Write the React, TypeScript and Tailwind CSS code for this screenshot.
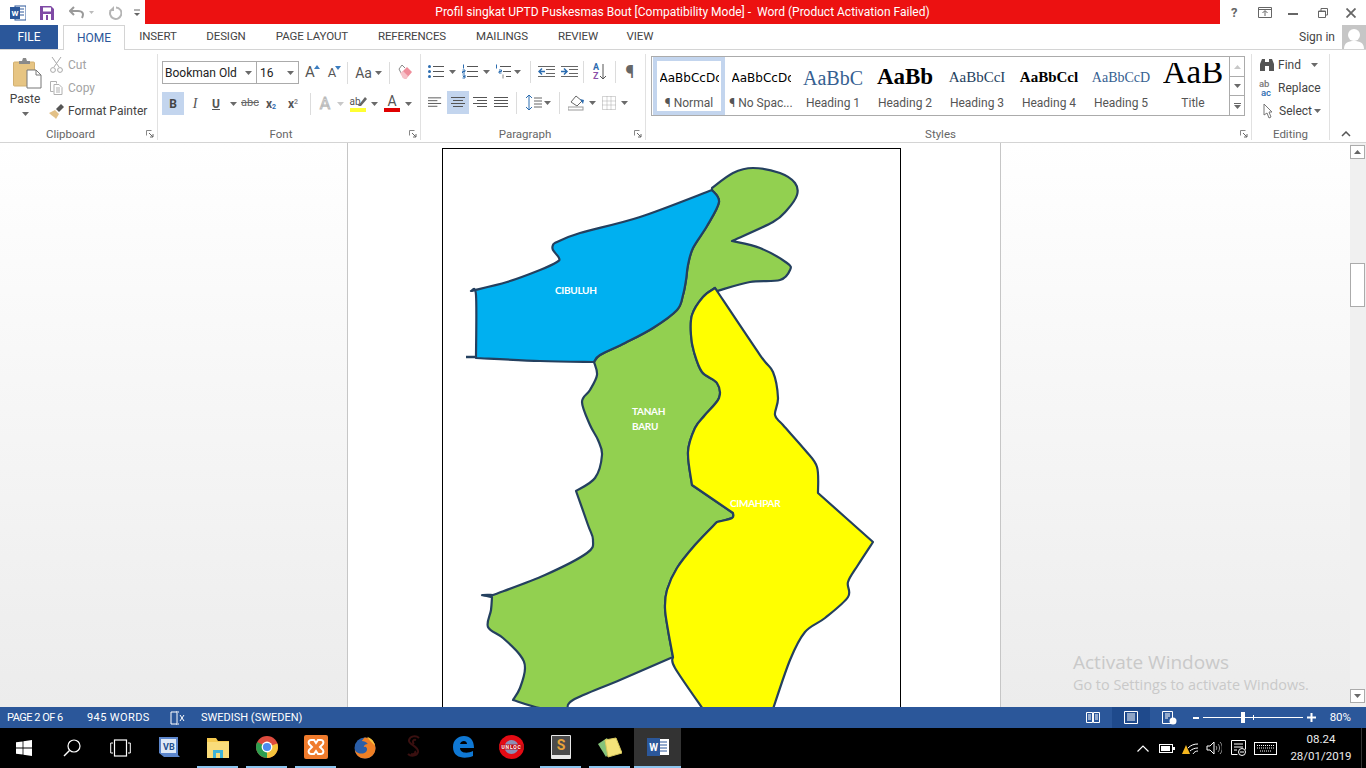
import React from "react";

type P = [number, number];
function curve(pts: P[]): string {
  let d = "";
  for (let i = 0; i < pts.length - 1; i++) {
    const p0 = pts[Math.max(0, i - 1)], p1 = pts[i], p2 = pts[i + 1], p3 = pts[Math.min(pts.length - 1, i + 2)];
    const c1 = [p1[0] + (p2[0] - p0[0]) / 6, p1[1] + (p2[1] - p0[1]) / 6];
    const c2 = [p2[0] - (p3[0] - p1[0]) / 6, p2[1] - (p3[1] - p1[1]) / 6];
    d += `C${c1[0]} ${c1[1]} ${c2[0]} ${c2[1]} ${p2[0]} ${p2[1]}`;
  }
  return d;
}
const shape = (...segs: P[][]) => `M${segs[0][0][0]} ${segs[0][0][1]}` + segs.map(curve).join("") + "Z";
const rev = (a: P[]) => [...a].reverse();

const blueRight: P[] = [[712,190],[719,202],[707,226],[693,248],[688,265],[686,280],[683,295],[677,310],[653,328],[625,343],[600,355],[594,362]];
const blueBottom: P[] = [[594,362],[540,361],[476,358]];
const blueLeft: P[] = [[476,358],[476,295],[471,291]];
const blueTop: P[] = [[471,291],[507,282],[540,270],[557,262],[559,258],[553,250],[553,245],[557,242],[580,233],[640,217],[712,190]];

const gTop1: P[] = [[712,188],[733,173],[753,168],[780,173],[795,183],[797,195],[787,210],[773,222],[732,241]];
const gTop2: P[] = [[732,241],[760,248],[787,263],[790,270],[780,280],[750,282],[717,291]];
const yLeftA: P[] = [[715,288],[703,297],[692,315],[691,335],[694,352],[702,372],[717,383],[719,398],[705,415],[695,428],[688,452],[692,485]];
const yNotch: P[] = [[692,485],[733,513]];
const yNotch2: P[] = [[733,513],[732,518],[717,522]];
const yLeftB: P[] = [[717,522],[695,545],[677,568],[667,590],[665,608],[668,630],[673,657]];
const gBot: P[] = [[673,657],[620,680],[573,700],[568,710]];
const gBot2: P[] = [[568,710],[540,708],[513,700]];
const gLeft1: P[] = [[513,700],[520,688],[525,668],[520,655],[503,638],[488,627],[491,610],[492,597]];
const gLeft2: P[] = [[493,595],[545,575],[587,553],[593,540],[588,525],[576,491]];
const gLeft3: P[] = [[576,491],[595,478],[602,455],[598,440],[590,425],[582,402],[590,390],[597,375],[594,362]];

const yRight: P[] = [[715,288],[760,355],[773,372],[778,398],[775,415],[783,425],[805,450],[817,467],[818,493]];
const yRight2: P[] = [[818,493],[873,542]];
const yRight3: P[] = [[873,542],[858,565],[848,582],[848,597],[825,618],[805,632],[790,660],[772,712]];
const yBot: P[] = [[772,712],[705,712]];
const yBot2: P[] = [[705,712],[675,668],[673,657]];

function MapArt() {
  const stroke = "#24405f";
  return (
    <svg width="457" height="580" viewBox="443 149 457 580" className="block">
      <path d={shape(gTop1, gTop2, [[717,291],[715,288]], yLeftA, yNotch, yNotch2, yLeftB, gBot, gBot2, gLeft1, [[492,597],[482,595],[493,595]], gLeft2, gLeft3, rev(blueRight))} fill="#92d050" stroke={stroke} strokeWidth="2.2" strokeLinejoin="round" />
      <path d={shape(blueRight, blueBottom, blueLeft, blueTop)} fill="#00b0f0" stroke={stroke} strokeWidth="2.2" strokeLinejoin="round" />
      <path d="M466 357H477" stroke={stroke} strokeWidth="2.5" />
      <path d={shape(yRight, yRight2, yRight3, yBot, yBot2, rev(yLeftB), rev(yNotch2), rev(yNotch), rev(yLeftA))} fill="#ffff00" stroke={stroke} strokeWidth="2.2" strokeLinejoin="round" />
      <g fontFamily="Lato, sans-serif" fontSize="10" fontWeight="700" fill="#ffffff" letterSpacing="-0.3">
        <text x="555" y="294">CIBULUH</text>
        <text x="632" y="415">TANAH</text>
        <text x="632" y="430">BARU</text>
        <text x="730" y="507">CIMAHPAR</text>
      </g>
    </svg>
  );
}

const Caret = ({ c = "#6a6a6a" }: { c?: string }) => (
  <svg width="7" height="4" viewBox="0 0 7 4" className="block shrink-0"><path d="M0 0h7L3.5 4z" fill={c} /></svg>
);
const Slot = ({ w, children, cls = "" }: { w: number; children?: React.ReactNode; cls?: string }) => (
  <div style={{ width: w }} className={`flex items-center justify-center h-full shrink-0 ${cls}`}>{children}</div>
);
const Sep = () => <div className="w-px h-[22px] bg-[#dcdcdc] shrink-0" />;
const Launcher = () => (
  <svg width="8" height="8" viewBox="0 0 8 8" className="block"><path d="M.5.5h5M.5.5v5" stroke="#888" fill="none" /><path d="M3 3l4 4M7 4v3H4" stroke="#666" fill="none" /></svg>
);
const Group = ({ w, label, children, launcher = true, pad = "" }: { w: number; label: string; children: React.ReactNode; launcher?: boolean; pad?: string }) => (
  <div style={{ width: w }} className="h-full shrink-0 flex flex-col">
    <div className={`h-[77px] ${pad}`}>{children}</div>
    <div className={`relative h-[15px] flex items-center justify-center text-[11.5px] text-[#666] leading-none ${launcher ? "pr-[16px]" : ""}`}>
      {label}
      {launcher && <div className="absolute right-[3px] top-[3px]"><Launcher /></div>}
    </div>
  </div>
);
const GroupSep = () => <div className="w-px h-[86px] mt-[4px] bg-[#e1e1e1] shrink-0" />;

const Lines = ({ d, c = "#555" }: { d: string; c?: string }) => (
  <svg width="16" height="14" viewBox="0 0 16 14" className="block"><path d={d} stroke={c} fill="none" /></svg>
);

const Bullets = () => (
  <svg width="16" height="15" viewBox="0 0 16 15"><path d="M5 2.5h11M5 7.5h11M5 12.5h11" stroke="#555" /><circle cx="1.5" cy="2.5" r="1.5" fill="#2b6cb0" /><circle cx="1.5" cy="7.5" r="1.5" fill="#2b6cb0" /><circle cx="1.5" cy="12.5" r="1.5" fill="#2b6cb0" /></svg>
);
const Numbers = () => (
  <svg width="16" height="15" viewBox="0 0 16 15"><path d="M5 2.5h11M5 7.5h11M5 12.5h11" stroke="#555" /><path d="M1.5 .5v4M.5 6h2.5v1.5H.5V9H3M.5 11H3v3H.5M1 12.5h2" stroke="#2b6cb0" fill="none" /></svg>
);
const Multi = () => (
  <svg width="16" height="15" viewBox="0 0 16 15"><path d="M5 2.5h11M8 7.5h8M11 12.5h5" stroke="#555" /><path d="M1.5 .5v4M4 6h2.5v1.5H4V9h2.5" stroke="#2b6cb0" fill="none" /><path d="M8 10.5v4" stroke="#888" /></svg>
);
const Indent = ({ inc }: { inc?: boolean }) => (
  <svg width="17" height="13" viewBox="0 0 17 13"><path d="M0 1.5h17M8 4.5h9M8 8.5h9M0 11.5h17" stroke="#666" /><path d={inc ? "M0 6.5h5M3 3.5l3 3-3 3" : "M7 6.5H1M4 3.5l-3 3 3 3"} stroke="#2b6cb0" strokeWidth="1.5" fill="none" /></svg>
);

function Paste() {
  return (
    <svg width="29" height="32" viewBox="0 0 29 32" className="block">
      <rect x="0.500" y="5" width="21" height="24" rx="1" fill="#e7c583" stroke="#d2b071" />
      <path d="M6 4h3l1-3h3l1 3h3v3H6z" fill="#8a8a8a" />
      <path d="M14 13h9l5 5v13H14z" fill="#fff" stroke="#777" />
      <path d="M23 13v5h5" fill="none" stroke="#777" />
    </svg>
  );
}

function StyleCell({ name, children, selected }: { name: string; children: React.ReactNode; selected?: boolean }) {
  return (
    <div className={`w-[72px] h-full shrink-0 flex flex-col ${selected ? "border-[4px] border-[#c3d5ee]" : "border-[4px] border-transparent"}`}>
      <div className="h-[33px] overflow-hidden flex items-center justify-center whitespace-nowrap mx-[1px]">{children}</div>
      <div className="h-[17px] flex items-center justify-center text-[12px] text-[#555] whitespace-nowrap leading-none">{name}</div>
    </div>
  );
}

function Ribbon() {
  return (
    <div className="h-[93px] flex bg-white border-b border-[#d4d4d4] text-[12px] text-[#444] shrink-0 relative">
      <Group w={157} label="Clipboard" pad="flex">
        <div className="w-[50px] flex flex-col items-center pt-[7px] pl-[4px]">
          <Paste />
          <div className="mt-[2px] -ml-[4px] text-[12px] leading-[16px] text-[#444]">Paste</div>
          <div className="mt-[5px] -ml-[4px]"><Caret /></div>
        </div>
        <div className="flex flex-col pt-[3px]">
          <div className="h-[23px] flex items-center gap-[5px] text-[#a3a3a3]">
            <svg width="13" height="16" viewBox="0 0 13 16"><path d="M2 0l7 10M11 0L4 10" stroke="#a8a8a8" fill="none" /><circle cx="3" cy="13" r="2.4" fill="none" stroke="#a8a8a8" /><circle cx="10" cy="13" r="2.4" fill="none" stroke="#a8a8a8" /></svg>
            Cut
          </div>
          <div className="h-[24px] flex items-center gap-[5px] text-[#a3a3a3]">
            <svg width="13" height="14" viewBox="0 0 13 14"><path d="M.5.5h6v2M.5.5v10h3M4 3.5h5l3 3v7H4z" fill="none" stroke="#b0b0b0" /><path d="M6 7h4M6 9h4M6 11h4" stroke="#b0b0b0" /></svg>
            Copy
          </div>
          <div className="h-[22px] flex items-center gap-[3px] -ml-[1px] text-[#444]">
            <svg width="16" height="15" viewBox="0 0 16 15"><path d="M0 9l6-3 4 4-3 5c-1-2-4-3-7-6z" fill="#e3c187" /><path d="M7 5l5-5 3 3-5 5z" fill="#555" /></svg>
            Format Painter
          </div>
        </div>
      </Group>
      <GroupSep />
      <Group w={262} label="Font">
        <div className="pl-[4px] pt-[11px] flex flex-col gap-[8px]">
          <div className="h-[23px] flex items-center">
            <div className="w-[95px] h-[23px] border border-[#ababab] flex items-center justify-between pl-[2px] pr-[4px] text-[#222]">Bookman Old<Caret /></div>
            <div className="w-[42px] h-[23px] border border-l-0 border-[#ababab] flex items-center justify-between pl-[3px] pr-[4px] text-[#222]">16<Caret /></div>
            <Slot w={22}><span className="relative text-[15px] text-[#555] leading-none">A<svg className="absolute -right-[5px] top-0" width="6" height="4"><path d="M0 4l3-4 3 4z" fill="#3b7dc0" /></svg></span></Slot>
            <Slot w={22}><span className="relative text-[13px] text-[#555] leading-none">A<svg className="absolute -right-[5px] top-0" width="6" height="4"><path d="M0 0l3 4 3-4z" fill="#3b7dc0" /></svg></span></Slot>
            <div className="w-[4px]" /><Sep />
            <Slot w={41}><span className="flex items-center gap-[3px]"><span className="text-[14px] text-[#555] leading-none">Aa</span><Caret /></span></Slot>
            <Sep />
            <Slot w={18} cls="ml-[6px]">
              <svg width="16" height="16" viewBox="0 0 16 16"><path d="M4 8l6-6 5 5-6 7-3-1z" fill="#ef8d9a" /><path d="M4 8L2 4l3-4 3 3" fill="none" stroke="#888" /><path d="M6 13l-3-5 3-2 5 5-2 3z" fill="#f6c2c9" /></svg>
            </Slot>
          </div>
          <div className="h-[23px] flex items-center">
            <Slot w={22} cls="bg-[#c3d5ee]"><span className="font-bold text-[12px] text-[#444]">B</span></Slot>
            <Slot w={22}><span className="italic font-['Liberation_Serif'] text-[14px] text-[#555]">I</span></Slot>
            <Slot w={20}><span className="underline font-bold text-[12px] text-[#555]">U</span></Slot>
            <Slot w={14}><Caret /></Slot>
            <Slot w={20}><span className="line-through text-[11px] text-[#666]">abc</span></Slot>
            <Slot w={22}><span className="font-bold text-[12px] text-[#555]">x<sub className="text-[7px] text-[#2b6cb0]">2</sub></span></Slot>
            <Slot w={22}><span className="font-bold text-[12px] text-[#555]">x<sup className="text-[7px] text-[#888]">2</sup></span></Slot>
            <div className="w-[6px]" /><Sep />
            <Slot w={25} cls="pl-[3px]"><span className="text-[16px] text-white leading-none [-webkit-text-stroke:1px_#bbb]">A</span></Slot>
            <Slot w={9}><Caret c="#c8c8c8" /></Slot>
            <Slot w={22} cls="pl-[4px]">
              <span className="relative flex flex-col items-center leading-none">
                <span className="text-[10px] text-[#555] leading-[11px] pr-[6px]">ab</span>
                <svg className="absolute right-0 top-0" width="9" height="11" viewBox="0 0 9 11"><path d="M0 10L7 1l2 2-6 7z" fill="#666" /></svg>
                <span className="w-[16px] h-[4px] bg-[#ffff33] mt-[1px]" />
              </span>
            </Slot>
            <Slot w={15}><Caret /></Slot>
            <Slot w={20}><span className="flex flex-col items-center leading-none"><span className="text-[14px] text-[#555] leading-[13px]">A</span><span className="w-[16px] h-[4px] bg-[#e00000]" /></span></Slot>
            <Slot w={12}><Caret /></Slot>
          </div>
        </div>
      </Group>
      <GroupSep />
      <Group w={224} label="Paragraph">
        <div className="pl-[7px] pt-[10px] flex flex-col gap-[8px]">
          <div className="h-[23px] flex items-center">
            <Slot w={16}><Bullets /></Slot><Slot w={17}><Caret /></Slot>
            <Slot w={16} cls="ml-[1px]"><Numbers /></Slot><Slot w={17}><Caret /></Slot>
            <Slot w={16}><Multi /></Slot><Slot w={13}><Caret /></Slot>
            <div className="w-[6px]" /><Sep />
            <Slot w={25} cls="pl-[6px]"><Indent /></Slot>
            <Slot w={24} cls="pl-[3px]"><Indent inc /></Slot>
            <div className="w-[3px]" /><Sep />
            <Slot w={31}><span className="flex items-center gap-[1px]"><span className="flex flex-col text-[9px] font-bold leading-[9px]"><span className="text-[#2b6cb0]">A</span><span className="text-[#8a4fa8]">Z</span></span><svg width="6" height="16" viewBox="0 0 6 16"><path d="M3 0v15M0 12l3 3 3-3" stroke="#555" fill="none" /></svg></span></Slot>
            <Sep />
            <Slot w={28}><span className="text-[18px] text-[#666] leading-none">¶</span></Slot>
          </div>
          <div className="h-[23px] flex items-center">
            <Slot w={15}><Lines d="M0 1.5h14M0 4.5h10M0 7.5h14M0 10.5h10" /></Slot>
            <Slot w={22} cls="ml-[4px] bg-[#c3d5ee]"><Lines d="M1 1.5h14M3 4.5h10M1 7.5h14M3 10.5h10" /></Slot>
            <Slot w={16} cls="ml-[3px]"><Lines d="M1 1.5h14M5 4.5h10M1 7.5h14M5 10.5h10" /></Slot>
            <Slot w={16} cls="ml-[5px]"><Lines d="M1 1.5h14M1 4.5h14M1 7.5h14M1 10.5h14" /></Slot>
            <div className="w-[7px]" /><Sep />
            <Slot w={24} cls="ml-[1px] pl-[8px]"><svg width="16" height="17" viewBox="0 0 16 17"><path d="M3 1v15M0 4l3-3 3 3M0 13l3 3 3-3" stroke="#2b6cb0" fill="none" /><path d="M8 4h8M8 7h8M8 10h8M8 13h8" stroke="#666" /></svg></Slot>
            <Slot w={10}><Caret /></Slot>
            <div className="w-[7px]" /><Sep />
            <Slot w={26} cls="pl-[6px]"><svg width="17" height="17" viewBox="0 0 17 17"><path d="M3 8l5-6 6 5-5 5z" fill="#fff" stroke="#666" /><path d="M12 5l3 5 1-4z" fill="#2b6cb0" /><rect x="0" y="13" width="15" height="3" fill="#fff" stroke="#999" /></svg></Slot>
            <Slot w={12}><Caret /></Slot>
            <Slot w={17} cls="ml-[2px]"><svg width="14" height="14" viewBox="0 0 14 14"><path d="M.5.5h13v13H.5zM5 .5v13M9 .5v13M.5 5h13M.5 9h13" fill="none" stroke="#aaa" strokeDasharray="1 1" /></svg></Slot>
            <Slot w={15}><Caret /></Slot>
          </div>
        </div>
      </Group>
      <GroupSep />
      <Group w={605} label="Styles" pad="pl-[5px] pt-[6px]">
        <div className="w-[594px] h-[60px] border border-[#ababab] flex">
          <div className="flex h-full pl-[1px] w-[577px] overflow-hidden">
            <StyleCell name="¶ Normal" selected><span className="block w-[59px] overflow-hidden font-['DejaVu_Sans'] text-[12px] text-black">AaBbCcDc</span></StyleCell>
            <StyleCell name="¶ No Spac..."><span className="block w-[59px] overflow-hidden font-['DejaVu_Sans'] text-[12px] text-black">AaBbCcDc</span></StyleCell>
            <StyleCell name="Heading 1"><span className="font-['Liberation_Serif'] text-[20px] text-[#365f91]">AaBbC</span></StyleCell>
            <StyleCell name="Heading 2"><span className="font-['Liberation_Serif'] font-bold text-[23px] text-black">AaBb</span></StyleCell>
            <StyleCell name="Heading 3"><span className="font-['Liberation_Serif'] text-[15px] text-[#243f60]">AaBbCcI</span></StyleCell>
            <StyleCell name="Heading 4"><span className="font-['Liberation_Serif'] font-bold text-[15px] text-black">AaBbCcl</span></StyleCell>
            <StyleCell name="Heading 5"><span className="font-['Liberation_Serif'] text-[14px] text-[#365f91]">AaBbCcD</span></StyleCell>
            <StyleCell name="Title">
              <span className="block relative -top-[4px] h-[21px] overflow-hidden">
                <span className="block -mt-[7px] font-['Liberation_Serif'] text-[33px] text-black leading-[33px]">AaB</span>
              </span>
            </StyleCell>
          </div>
          <div className="w-[15px] ml-auto border-l border-[#ababab] flex flex-col">
            <div className="h-[20px] flex items-center justify-center border-b border-[#ababab]"><svg width="7" height="4"><path d="M0 4h7L3.5 0z" fill="#c8c8c8" /></svg></div>
            <div className="h-[19px] flex items-center justify-center border-b border-[#ababab]"><Caret /></div>
            <div className="flex-1 flex flex-col items-center justify-center gap-[1px]"><div className="w-[7px] h-px bg-[#666]" /><Caret /></div>
          </div>
        </div>
      </Group>
      <GroupSep />
      <Group w={77} label="Editing" launcher={false} pad="pt-[3px] pl-[7px]">
        <div className="h-[23px] flex items-center gap-[3px]">
          <svg width="16" height="14" viewBox="0 0 16 14"><path d="M1 6l2-5h3v3h4V1h3l2 5v7h-5V8H6v5H1z" fill="#555" /></svg>
          <span>Find</span><span className="ml-[7px]"><Caret /></span>
        </div>
        <div className="h-[23px] flex items-center gap-[3px]">
          <span className="w-[16px] flex flex-col text-[9.5px] leading-[9px] font-medium"><span className="text-[#777]">ab</span><span className="text-[#2b6cb0] pl-[2px]">ac</span></span>
          <span>Replace</span>
        </div>
        <div className="h-[23px] flex items-center gap-[2px]">
          <svg width="18" height="16" viewBox="0 0 18 16"><path d="M5 1v11l3-2 2 5 2-1-2-5h3z" fill="#fff" stroke="#777" /></svg>
          <span>Select</span><Caret />
        </div>
      </Group>
      <GroupSep />
      <div className="flex-1 flex items-end justify-center pb-[5px]">
        <svg width="10" height="6" viewBox="0 0 10 6" className="mr-[5px]"><path d="M1 5l4-4 4 4" stroke="#555" strokeWidth="1.5" fill="none" /></svg>
      </div>
    </div>
  );
}

function ScrollBar() {
  return (
    <div className="w-[16px] h-full shrink-0 flex flex-col bg-[#f0f0f0] pt-[2px] pb-[4px] items-start">
      <div className="w-[15px] h-[14px] bg-white border border-[#ababab] flex items-center justify-center"><svg width="7" height="4"><path d="M0 4h7L3.5 0z" fill="#666" /></svg></div>
      <div className="w-[15px] h-[44px] bg-white border border-[#ababab] mt-[104px]" />
      <div className="mt-auto w-[15px] h-[14px] bg-white border border-[#ababab] flex items-center justify-center"><Caret /></div>
    </div>
  );
}

function StatusBar() {
  return (
    <div className="h-[21px] shrink-0 bg-[#2b579a] text-white text-[11px] flex items-center leading-none">
      <span className="ml-[7px] w-[80px] tracking-[-0.5px] whitespace-nowrap">PAGE 2 OF 6</span>
      <span className="w-[83px] tracking-[0.4px] whitespace-nowrap">945 WORDS</span>
      <svg width="15" height="14" viewBox="0 0 15 14" className="mr-[16px]"><path d="M7 1H1v12h6M7 0v14M8 1h1M8 13h1M10 4l4 6M14 4l-4 6" stroke="#fff" fill="none" /></svg>
      <span>SWEDISH (SWEDEN)</span>
      <div className="ml-auto flex items-center h-full">
        <svg width="14" height="13" viewBox="0 0 14 13" className="mr-[12px]"><path d="M.5 1.5h6v10h-6zM7.5 1.5h6v10h-6zM2 4h3M2 6h3M2 8h3M9 4h3M9 6h3M9 8h3" stroke="#fff" fill="none" /></svg>
        <div className="w-[38px] h-full bg-[#1f4a8c] flex items-center justify-center">
          <svg width="14" height="13" viewBox="0 0 14 13"><path d="M.5.5h13v12H.5zM3 3h8M3 5h8M3 7h8M3 9h8" stroke="#fff" fill="none" /></svg>
        </div>
        <svg width="15" height="14" viewBox="0 0 15 14" className="ml-[12px] mr-[16px]"><path d="M.5.5h10v12H.5zM3 3h5M3 5h5M3 7h3" stroke="#fff" fill="none" /><circle cx="11" cy="10" r="3.5" fill="#fff" /></svg>
        <div className="w-[6px] h-[2px] bg-white" />
        <div className="relative w-[100px] h-px bg-white mx-[4px]">
          <div className="absolute left-[38px] -top-[5px] w-[4px] h-[11px] bg-white" />
          <div className="absolute left-[50px] -top-[2px] w-px h-[5px] bg-white" />
        </div>
        <svg width="9" height="9" viewBox="0 0 9 9"><path d="M0 4.5h9M4.5 0v9" stroke="#fff" strokeWidth="2" /></svg>
        <span className="ml-[14px] mr-[15px] text-[11.5px]">80%</span>
      </div>
    </div>
  );
}

function Tb({ children, bar }: { children: React.ReactNode; bar?: boolean }) {
  return (
    <div className="w-[49px] h-full shrink-0 flex flex-col items-center">
      <div className="flex-1 flex items-center justify-center">{children}</div>
      <div className={`h-[2px] w-[41px] ${bar ? "bg-[#8cc4ee]" : ""}`} />
    </div>
  );
}

function Taskbar() {
  return (
    <div className="h-[40px] shrink-0 bg-black flex items-stretch text-white">
      <div className="w-[48px] flex items-center justify-center">
        <svg width="16" height="16" viewBox="0 0 16 16"><path d="M0 2.3L6.6 1.4V7.5H0zM7.4 1.3L16 0V7.5H7.4zM0 8.4H6.6V14.6L0 13.7zM7.4 8.4H16V16L7.4 14.7z" fill="#fff" /></svg>
      </div>
      <div className="w-[48px] flex items-center justify-center">
        <svg width="18" height="18" viewBox="0 0 18 18"><circle cx="11" cy="7" r="6" fill="none" stroke="#fff" strokeWidth="1.2" /><path d="M6.5 11.5L1 17" stroke="#fff" strokeWidth="1.4" /></svg>
      </div>
      <div className="w-[48px] flex items-center justify-center">
        <svg width="21" height="18" viewBox="0 0 21 18"><rect x="4.5" y="1" width="12" height="16" fill="none" stroke="#fff" strokeWidth="1.2" /><path d="M3 4H.7v10H3M18 4h2.300v10H18" fill="none" stroke="#fff" /></svg>
      </div>
      <Tb>
        <svg width="22" height="22" viewBox="0 0 22 22"><path d="M1 1h19v18l2 2H6L1 17z" fill="#5c86cc" /><rect x="3" y="3" width="15" height="14" fill="#dfe9f7" /><text x="5" y="14" fontSize="9" fontWeight="700" fill="#24508f" fontFamily="Roboto">VB</text></svg>
      </Tb>
      <Tb bar>
        <svg width="22" height="22" viewBox="0 0 22 22"><path d="M0 2h9l2 3h11v17H0z" fill="#f5c94f" /><rect x="0" y="6" width="22" height="16" fill="#f9dc7a" /><path d="M6 22v-8h10v8h-3v-5H9v5z" fill="#3fb4d8" /></svg>
      </Tb>
      <Tb bar>
        <svg width="22" height="22" viewBox="0 0 22 22"><circle cx="11" cy="11" r="11" fill="#dd4b3e" /><path d="M11 11L21.4 7.5A11 11 0 0 1 11 22z" fill="#f6c33c" /><path d="M11 11L11 22A11 11 0 0 1 1.2 6z" fill="#2e9e50" /><circle cx="11" cy="11" r="5.4" fill="#fff" /><circle cx="11" cy="11" r="4.1" fill="#4d8bf0" /></svg>
      </Tb>
      <Tb bar>
        <svg width="24" height="24" viewBox="0 0 24 24"><rect width="24" height="24" rx="2" fill="#f07b2c" /><path d="M7 5h3l2 3 2-3h3c2 0 3 2 2 4l-3 3 3 3c1 2 0 4-2 4h-3l-2-3-2 3H7c-2 0-3-2-2-4l3-3-3-3C4 7 5 5 7 5z" fill="none" stroke="#fff" strokeWidth="2" /></svg>
      </Tb>
      <Tb>
        <svg width="22" height="23" viewBox="0 0 22 23"><circle cx="11" cy="12" r="10.5" fill="#2a5ea8" /><path d="M11 1.5a10.5 10.5 0 0 1 10.5 10.5C21.5 18 17 22.5 11 22.5 6 22.5 1.5 19 .8 14c2 3 5 4 8 3.5 3-.5 5-3 4-5.5-1-2-3-1-3-1 0-2 2-3 4-3-1-2-4-3-6-3 1-1.500 2-3 3-3.500z" fill="#ef7f25" /><path d="M13 .8c3 1 6 3 7 6l1 3-3-3-2-2z" fill="#f6c23c" /></svg>
      </Tb>
      <Tb>
        <svg width="16" height="24" viewBox="0 0 16 24"><path d="M13 3C10 0 4 1 3 5c-1 5 10 6 9 12-1 4-7 5-10 2M10 5C7 4 6 7 8 9M5 19c3 1 5-1 4-3" fill="none" stroke="#3a1010" strokeWidth="2" /></svg>
      </Tb>
      <Tb>
        <svg width="22" height="22" viewBox="0 0 22 22"><path d="M1 11C1 4 6 0 12 0c6 0 10 4 10 12H8c0 5 7 6 13 3v5c-7 3-20 3-20-9zm7-3h7c0-4-6-4-7 0z" fill="#0f78d4" /></svg>
      </Tb>
      <Tb>
        <svg width="25" height="24" viewBox="0 0 25 24"><ellipse cx="12.500" cy="12" rx="12.500" ry="12" fill="#e40b14" /><circle cx="12.500" cy="12" r="7" fill="#8d8fb5" /><rect x="0" y="9.500" width="25" height="5" fill="#c20a12" /><text x="12.500" y="14" textAnchor="middle" fontSize="5" fontWeight="700" fill="#fff" letterSpacing="0.800" fontFamily="Roboto">UNLOC</text></svg>
      </Tb>
      <Tb bar>
        <svg width="22" height="26" viewBox="0 0 22 26"><rect x="1" y="1" width="20" height="24" rx="1" fill="#e8e8e8" /><rect x="2" y="2" width="18" height="19" fill="#4b4b4b" /><text x="11" y="16" textAnchor="middle" fontSize="14" fontWeight="700" fill="#e8a33a" fontFamily="Roboto">S</text></svg>
      </Tb>
      <Tb bar>
        <svg width="24" height="22" viewBox="0 0 24 22"><path d="M0 8l9-6 5 10-6 9z" fill="#84c27a" /><path d="M7 4l11-2 6 15-14 4z" fill="#f4e37a" stroke="#d8c85e" /></svg>
      </Tb>
      <div className="w-[47px] shrink-0 h-full bg-[#333333] flex flex-col items-center">
        <div className="flex-1 flex items-center justify-center">
          <svg width="22" height="20" viewBox="0 0 22 20"><rect x="8" y="2" width="14" height="16" fill="#fff" /><path d="M13 5h7M13 8h7M13 11h7M13 14h7" stroke="#2b579a" /><rect x="0" y="1" width="13" height="18" fill="#2b579a" /><text x="6.500" y="14" textAnchor="middle" fontSize="10" fontWeight="700" fill="#fff" fontFamily="Roboto">W</text></svg>
        </div>
        <div className="h-[2px] w-full bg-[#8cc4ee]" />
      </div>
      <div className="ml-auto flex items-center">
        <svg width="12" height="7" viewBox="0 0 12 7" className="mr-[10px]"><path d="M.5 6.500L6 1l5.500 5.500" stroke="#fff" fill="none" strokeWidth="1.2" /></svg>
        <svg width="16" height="9" viewBox="0 0 16 9" className="mr-[7px]"><rect x=".5" y=".5" width="13" height="8" fill="none" stroke="#fff" /><rect x="2" y="2" width="9" height="5" fill="#fff" /><rect x="14" y="3" width="2" height="3" fill="#fff" /></svg>
        <svg width="16" height="14" viewBox="0 0 16 14" className="mr-[8px]"><path d="M6 7c3-3 6-4 10-4M8 10c2-2 5-3 8-3M11 13c1-2 3-3 5-3" stroke="#fff" fill="none" /><path d="M4 4l4 9H0z" fill="#f5b71f" /></svg>
        <svg width="16" height="14" viewBox="0 0 16 14" className="mr-[9px]"><path d="M1 5h3l4-4v12l-4-4H1z" fill="none" stroke="#fff" /><path d="M10 5c1 1 1 3 0 4M12 3c2 2 2 6 0 8M14 1c3 3 3 9 0 12" stroke="#999" fill="none" /></svg>
        <svg width="16" height="16" viewBox="0 0 16 16" className="mr-[7px]"><path d="M.5.5h14v9M.5.5v14h6M3 4h9M3 7h9M3 10h3" stroke="#fff" fill="none" /><circle cx="11" cy="12" r="3.500" fill="none" stroke="#fff" /><path d="M9 12h4" stroke="#fff" /></svg>
        <svg width="23" height="13" viewBox="0 0 23 13" className="mr-[11px]"><rect x=".5" y=".5" width="22" height="12" fill="none" stroke="#fff" /><path d="M3 3.500h17M3 6h17M6 9h11" stroke="#fff" strokeDasharray="1 1" /></svg>
        <div className="w-[66px] mr-[7px] flex flex-col items-center text-[11.5px] leading-[17px] text-[#ececec]">
          <span>08.24</span>
          <span>28/01/2019</span>
        </div>
        <div className="w-[1px] h-full bg-[#333] mr-[4px]" />
      </div>
    </div>
  );
}

export default function App() {
  const tabs: [string, number][] = [["INSERT", 66], ["DESIGN", 70], ["PAGE LAYOUT", 102], ["REFERENCES", 98], ["MAILINGS", 82], ["REVIEW", 70], ["VIEW", 54]];
  return (
    <div className="w-[1366px] h-[768px] overflow-hidden flex flex-col bg-white font-['Roboto',sans-serif]">
      {/* Title bar */}
      <div className="h-[25px] flex shrink-0">
        <div className="w-[145px] flex items-center shrink-0">
          <div className="ml-[10px] w-[16px] h-[16px] relative">
            <svg width="16" height="16" viewBox="0 0 16 16"><rect x="5" y="1" width="11" height="14" fill="#fff" stroke="#2b579a" /><path d="M10 4h4M10 7h4M10 10h4" stroke="#2b579a" /><rect y="2" width="10" height="12" fill="#2b579a" /><text x="5" y="11" textAnchor="middle" fontSize="8" fontWeight="700" fill="#fff" fontFamily="Roboto">W</text></svg>
          </div>
          <svg width="14" height="14" viewBox="0 0 14 14" className="ml-[14px]"><path d="M0 0h11l3 3v11H0z" fill="#7f4aa5" /><rect x="3" y="1.500" width="8" height="4" fill="#fff" /><rect x="3" y="8" width="8" height="6" fill="#fff" /><rect x="6" y="9" width="2" height="5" fill="#7f4aa5" /></svg>
          <svg width="15" height="13" viewBox="0 0 15 13" className="ml-[15px]"><path d="M5 1L1 5l4 4M1 5h8c5 0 6 3 4 7" stroke="#9a9a9a" strokeWidth="2" fill="none" /></svg>
          <span className="ml-[5px]"><svg width="5" height="3"><path d="M0 0h5L2.500 3z" fill="#bbb" /></svg></span>
          <svg width="14" height="14" viewBox="0 0 14 14" className="ml-[14px]"><path d="M8 1.500A5.700 5.700 0 1 1 3 4" stroke="#b5b5b5" strokeWidth="2" fill="none" /><path d="M6 0v5H1z" fill="#b5b5b5" /></svg>
          <svg width="7" height="8" viewBox="0 0 7 8" className="ml-[12px]"><path d="M0 1h6" stroke="#666" /><path d="M0 4h6L3 7z" fill="#666" /></svg>
        </div>
        <div className="flex-1 h-[24px] bg-[#ec1111] flex items-center justify-center text-white text-[12px] whitespace-pre">Profil singkat UPTD Puskesmas Bout [Compatibility Mode] -  Word (Product Activation Failed)</div>
        <div className="w-[146px] shrink-0 flex items-center text-[#666]">
          <span className="ml-[11px] w-[20px] text-[13px] font-bold leading-none">?</span>
          <svg width="14" height="11" viewBox="0 0 14 11" className="ml-[7px]"><path d="M.5.5h13v10H.5zM.5 2.500h13M7 9V4M4.500 6L7 3.500 9.500 6" stroke="#666" fill="none" /></svg>
          <svg width="10" height="2" className="ml-[16px] mt-[3px]"><rect width="10" height="2" fill="#666" /></svg>
          <svg width="10" height="10" viewBox="0 0 10 10" className="ml-[20px]"><path d="M.5 3h7v6.500h-7zM.5 3.500h7M3 3V.5h6.500V7H8" stroke="#666" fill="none" /></svg>
          <svg width="10" height="10" viewBox="0 0 10 10" className="ml-[18px]"><path d="M.5.5l9 9M9.500.5l-9 9" stroke="#666" strokeWidth="1.800" /></svg>
        </div>
      </div>
      {/* Tabs */}
      <div className="h-[25px] flex items-stretch shrink-0 border-b border-[#d4d4d4] text-[12px] text-[#444]">
        <div className="w-[58px] bg-[#2b579a] text-white flex items-center justify-center">FILE</div>
        <div className="ml-[5px] w-[62px] h-[25px] border border-b-0 border-[#d4d4d4] bg-white text-[#2b579a] flex items-center justify-center">HOME</div>
        {tabs.map(([t, w]) => (
          <div key={t} style={{ width: w }} className="flex items-center justify-center text-[11.5px] tracking-[-0.1px] whitespace-nowrap">{t}</div>
        ))}
        <div className="ml-auto flex items-center">
          <span>Sign in</span>
          <div className="ml-[7px] w-[24px] h-[24px] bg-[#c6c6c6] overflow-hidden flex items-end justify-center">
            <svg width="24" height="24" viewBox="0 0 24 24"><circle cx="12" cy="10" r="6" fill="#fff" /><path d="M2 24c0-6 4-8 10-8s10 2 10 8z" fill="#fff" /></svg>
          </div>
        </div>
      </div>
      <Ribbon />
      {/* Document */}
      <div className="flex-1 min-h-0 flex relative overflow-hidden">
        <div className="w-[348px] shrink-0 border-r border-[#c6c6c6] bg-gradient-to-b from-white to-[#ececec]" />
        <div className="w-[653px] shrink-0 bg-white border-r border-[#c6c6c6] pl-[94px] pt-[5px] overflow-hidden">
          <div className="w-[459px] h-[600px] border-x border-t border-black">
            <MapArt />
          </div>
        </div>
        <div className="flex-1 bg-gradient-to-b from-white to-[#ececec]" />
        <ScrollBar />
        <div className="absolute left-[1073px] top-[507px] text-[#c9c9c9] font-['Open_Sans'] whitespace-nowrap">
          <div className="text-[19px] leading-[24px]">Activate Windows</div>
          <div className="text-[14.4px] leading-[22px]">Go to Settings to activate Windows.</div>
        </div>
      </div>
      <StatusBar />
      <Taskbar />
    </div>
  );
}
